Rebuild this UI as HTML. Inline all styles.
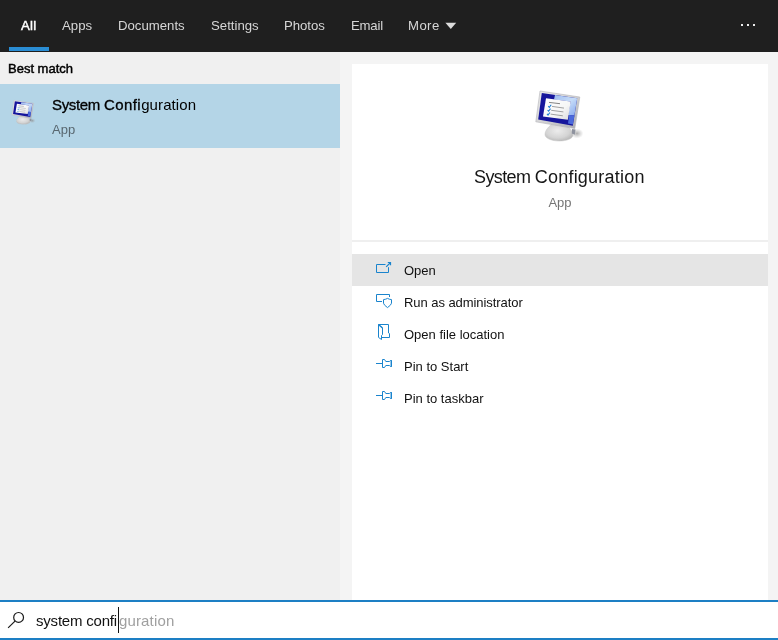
<!DOCTYPE html>
<html><head><meta charset="utf-8">
<style>
*{box-sizing:border-box;margin:0;padding:0}
html,body{width:778px;height:640px;overflow:hidden;background:#f4f4f4;font-family:"Liberation Sans",sans-serif;color:#000}
.abs{position:absolute}
.t{position:absolute;white-space:nowrap;will-change:transform}
#top{left:0;top:0;width:778px;height:52px;background:#1f1f1f}
.tab{top:18px;font-size:13.2px;color:#d6d6d6;line-height:16px}
.sb{-webkit-text-stroke:0.45px currentColor}
#ul{left:9px;top:47px;width:40px;height:4px;background:#2a8dd4}
#left{left:0;top:52px;width:340px;height:548px;background:#f0f0f0}
#sel{left:0;top:84px;width:340px;height:64px;background:#b4d5e7}
#right{left:352px;top:64px;width:416px;height:536px;background:#fff}
#div{left:352px;top:240px;width:416px;height:2px;background:#efefef}
#open{left:352px;top:254px;width:416px;height:32px;background:#e5e5e5}
.act{left:404px;font-size:13px;line-height:16px;color:#111}
#search{left:0;top:600px;width:778px;height:40px;background:#fff;border-top:2px solid #1d7fc4;border-bottom:2px solid #1d7fc4}
svg{position:absolute;overflow:visible}
</style></head><body>
<div class="abs" id="top"></div>
<div class="t tab sb" id="t_all" style="left:21.2px;letter-spacing:0.3px;color:#fff">All</div>
<div class="t tab" id="t_apps" style="left:62.1px">Apps</div>
<div class="t tab" id="t_docs" style="left:118.1px">Documents</div>
<div class="t tab" id="t_set" style="left:210.6px">Settings</div>
<div class="t tab" id="t_pho" style="left:284.4px;letter-spacing:-0.06px">Photos</div>
<div class="t tab" id="t_em" style="left:351px;letter-spacing:-0.22px">Email</div>
<div class="t tab" id="t_more" style="left:408.2px;letter-spacing:0.4px">More</div>
<svg style="left:0;top:0" width="778" height="52"><path d="M445.4 22.7H456.2L450.8 29Z" fill="#dcdcdc"/><g fill="#ececec"><rect x="741" y="24" width="2" height="2"/><rect x="747" y="24" width="2" height="2"/><rect x="753" y="24" width="2" height="2"/></g></svg>
<div class="abs" id="ul"></div>
<div class="abs" id="left"></div>
<div class="t sb" id="t_bm" style="left:8px;top:61px;font-size:13px;line-height:16px">Best match</div>
<div class="abs" id="sel"></div>
<div class="t" id="t_sc1" style="left:52px;top:96px;font-size:15px;line-height:18px"><span class="sb" id="t_sc1a" style="-webkit-text-stroke-width:0.32px"><span style="letter-spacing:-0.33px">System </span><span style="letter-spacing:0.45px">Confi</span></span><span id="t_sc1b" style="letter-spacing:0.1px">guration</span></div>
<div class="t" id="t_app1" style="left:52.3px;top:121.5px;font-size:13px;line-height:16px;color:#586770">App</div>
<div class="abs" id="right"></div>
<div class="t" id="t_sc2" style="left:474px;top:166.2px;font-size:18px;line-height:22px;color:#161616"><span style="letter-spacing:-0.62px">System </span><span style="letter-spacing:0.23px">Configuration</span></div>
<div class="t" id="t_app2" style="left:352px;width:416px;top:195px;text-align:center;font-size:13px;line-height:16px;color:#757575">App</div>
<div class="abs" id="div"></div>
<div class="abs" id="open"></div>
<div class="t act" id="a1" style="top:263px">Open</div>
<div class="t act" id="a2" style="top:295px;letter-spacing:-0.06px">Run as administrator</div>
<div class="t act" id="a3" style="top:327px">Open file location</div>
<div class="t act" id="a4" style="top:359px">Pin to Start</div>
<div class="t act" id="a5" style="top:391px">Pin to taskbar</div>
<svg style="left:0;top:0" width="778" height="600" fill="none" stroke="#1a84cd" stroke-width="1">
<path d="M385.5 264.5H376.5V272.5H388.5V267.2"/><path d="M386.2 266.8L390.5 262.5" stroke-width="1.2"/><path d="M387.8 262.5H390.5V265.2" stroke-width="1.2"/>
<path d="M382 301.5H376.5V294.5H389.5V297"/><path d="M383.5 299.6C385 299.5 386.5 299 387.5 298.4C388.5 299 390 299.5 391.5 299.6V303.2Q391.2 305 387.5 307.6Q383.8 305 383.5 303.2Z"/>
<path d="M378.5 324.5H388.5V333L389.5 333.6V337.5H381.5"/><path d="M378.5 324.5L382.5 328V334.6L381.5 335.5V339.5L378.5 337.4Z"/><path d="M378.5 324.5L382.5 328" stroke-width="1.3"/>
<g id="pin"><path d="M376 363.5H382.5"/><path d="M382.5 359.5H384.5L385.8 361.5H389.4L390.5 360.5H391.5V366.5H390.5L389.4 365.5H385.8L384.5 367.5H382.5Z"/><path d="M391.2 360.2V366.8" stroke-width="1.3"/></g>
<use href="#pin" y="32"/>
</svg>
<svg width="0" height="0" style="left:0;top:0"><defs>
<linearGradient id="gfr" x1="0" y1="0" x2="1" y2="1"><stop offset="0" stop-color="#ececec"/><stop offset="0.5" stop-color="#d2d2d4"/><stop offset="1" stop-color="#a9abb0"/></linearGradient>
<linearGradient id="gsc" x1="0" y1="0" x2="1" y2="1"><stop offset="0" stop-color="#9dbcf0"/><stop offset="0.5" stop-color="#c6dcf8"/><stop offset="1" stop-color="#86a8ee"/></linearGradient>
<linearGradient id="gpa" x1="0" y1="0" x2="1" y2="1"><stop offset="0" stop-color="#ffffff"/><stop offset="0.6" stop-color="#f6f6f6"/><stop offset="1" stop-color="#dcdcdc"/></linearGradient>
<radialGradient id="gba" cx="0.45" cy="0.4" r="0.6"><stop offset="0" stop-color="#ececec"/><stop offset="0.7" stop-color="#d4d4d4"/><stop offset="1" stop-color="#bcbcbc"/></radialGradient>
<radialGradient id="gsh" cx="0.5" cy="0.5" r="0.5"><stop offset="0" stop-color="#888" stop-opacity="0.7"/><stop offset="1" stop-color="#aaa" stop-opacity="0"/></radialGradient>
<filter id="bl" x="-10%" y="-10%" width="120%" height="120%"><feGaussianBlur stdDeviation="0.45"/></filter>
<g id="ico" filter="url(#bl)">
<ellipse cx="49" cy="51.5" rx="6.5" ry="5" fill="url(#gsh)"/>
<path d="M17 52.5C17 48 21 44.5 24 42L40 45C43 47 45 50 45 53C45 56.5 39 59 31 59C23 59 17 56 17 52.5Z" fill="url(#gba)" stroke="#c6c6c6" stroke-width="0.5"/>
<path d="M44 47L47.5 47.6L46.8 52.8L43.8 51.5Z" fill="#8e929e"/>
<path d="M12 9L51.8 15L46.8 46.6L7.8 39.8Z" fill="url(#gfr)" stroke="#b4b4b8" stroke-width="0.6"/>
<path d="M13.8 11L49.2 16.2L44.8 43.8L10.2 37.4Z" fill="#15159c"/>
<path d="M27 12.9L49.2 16.2L46.4 33.5L40 33L42.6 19.6L26 17.4Z" fill="url(#gsc)"/>
<path d="M46.4 33.5L44.9 42.5L40 41.6L41 33Z" fill="#4c6adc"/>
<path d="M18 16.3L42.7 19.6L39.8 37.8L15 34.5Z" fill="url(#gpa)"/>
<g stroke="#8a8a8a" stroke-width="0.8" fill="none"><path d="M21 20.4L32 21.7" stroke="#666"/><path d="M24 24.4L36 26.1"/><path d="M23.2 28.3L35.4 29.9"/><path d="M22.6 32.1L34.8 33.8"/></g>
<g stroke="#1d7fd6" stroke-width="1.1" fill="none"><path d="M20.3 24.2L21.3 25.4L23.2 22.8"/><path d="M19.6 28L20.6 29.2L22.5 26.6"/><path d="M19 31.9L20 33.1L21.9 30.5"/></g>
</g></defs></svg>
<svg style="left:528px;top:82px" width="64" height="64" viewBox="0 0 64 64"><use href="#ico"/></svg>
<svg style="left:8px;top:95.8px" width="31.7" height="30.7" viewBox="0 0 64 64" preserveAspectRatio="none"><use href="#ico"/></svg>
<div class="abs" id="search"></div>
<svg style="left:0;top:600px" width="40" height="40" fill="none" stroke="#1a1a1a" stroke-width="1.2"><circle cx="18.6" cy="17.4" r="4.9"/><path d="M15 21.1L8.1 27.9"/></svg>
<div class="t" id="t_q" style="left:36px;top:612px;font-size:15px;line-height:18px;color:#111"><span id="t_q1" style="letter-spacing:-0.2px">system confi</span><span id="t_q2" style="color:#a0a0a0;margin-left:2px;letter-spacing:0.15px">guration</span></div>
<div class="abs" style="left:118px;top:607px;width:1px;height:26px;background:#111"></div>
</body></html>
